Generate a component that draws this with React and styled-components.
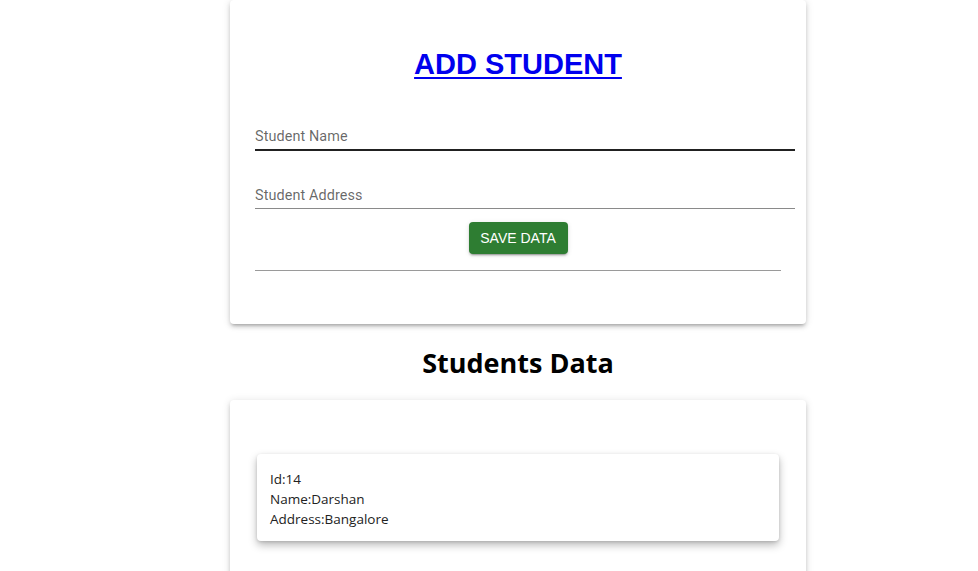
import React from 'react';
import styled, { createGlobalStyle } from 'styled-components';

const GlobalStyle = createGlobalStyle`
  html, body {
    margin: 0;
    padding: 0;
    background: #fff;
    overflow: hidden;
  }
`;

const Page = styled.div`
  width: 576px;
  margin-left: 230px;
  display: flex;
  flex-direction: column;
`;

const Card = styled.div`
  background: #fff;
  border-radius: 4px;
  box-shadow: 0 3px 3px -2px rgba(0, 0, 0, 0.2), 0 3px 4px 0 rgba(0, 0, 0, 0.14),
    0 1px 8px 0 rgba(0, 0, 0, 0.12);
  padding: ${(p) => p.$pad};
  margin-top: ${(p) => p.$top || '0'};
`;

const Title = styled.h1`
  margin: 48px 0 0;
  text-align: center;
  font-family: 'Liberation Sans', Arial, sans-serif;
  font-size: 29px;
  line-height: 32px;
  font-weight: bold;
  color: #0000ee;
  text-decoration: underline;
  text-decoration-thickness: 2px;
  text-underline-offset: 3px;
`;

const Field = styled.label`
  display: flex;
  align-items: center;
  height: 26px;
  padding-top: 4px;
  margin-right: -14px;
  margin-top: ${(p) => p.$top};
  border-bottom: ${(p) => (p.$active ? '2px solid #212121' : '1px solid #8a8a8a')};
  font-family: Roboto, 'Liberation Sans', sans-serif;
  font-size: 14.4px;
  letter-spacing: 0.1px;
  color: rgba(0, 0, 0, 0.6);
`;

const ButtonRow = styled.div`
  display: flex;
  justify-content: center;
  margin-top: 13px;
`;

const SaveButton = styled.button`
  width: 99px;
  height: 32px;
  border: none;
  border-radius: 4px;
  background: #2e7d32;
  color: #fff;
  font-family: 'Liberation Sans', Arial, sans-serif;
  font-size: 14px;
  font-weight: 400;
  text-transform: uppercase;
  box-shadow: 0 3px 1px -2px rgba(0, 0, 0, 0.2), 0 2px 2px 0 rgba(0, 0, 0, 0.14),
    0 1px 5px 0 rgba(0, 0, 0, 0.12);
  cursor: pointer;
`;

const Divider = styled.hr`
  margin: 16px 0 0;
  border: none;
  border-top: 1px solid #9a9a9a;
`;

const Heading = styled.h2`
  margin: 19px 0 0;
  text-align: center;
  font-family: 'Open Sans', 'Noto Sans', sans-serif;
  font-size: 27px;
  line-height: 40px;
  font-weight: 700;
  color: #000;
`;

const StudentCard = styled.div`
  background: #fff;
  border-radius: 4px;
  padding: 15px 13px 12px;
  box-shadow: 0 4px 8px rgba(0, 0, 0, 0.28), 0 1px 3px rgba(0, 0, 0, 0.12);
  font-family: 'Open Sans', 'Noto Sans', sans-serif;
  font-size: 13.5px;
  line-height: 20px;
  color: #222;
`;

const students = [{ id: 14, name: 'Darshan', address: 'Bangalore' }];

export default function App() {
  return (
    <>
      <GlobalStyle />
      <Page>
        <Card $pad="0 25px 53px">
          <Title>ADD STUDENT</Title>
          <Field $top="39px" $active>Student Name</Field>
          <Field $top="27px">Student Address</Field>
          <ButtonRow>
            <SaveButton>Save Data</SaveButton>
          </ButtonRow>
          <Divider />
        </Card>
        <Heading>Students Data</Heading>
        <Card $top="17px" $pad="54px 27px 40px">
          {students.map((s) => (
            <StudentCard key={s.id}>
              <div>Id:{s.id}</div>
              <div>Name:{s.name}</div>
              <div>Address:{s.address}</div>
            </StudentCard>
          ))}
        </Card>
      </Page>
    </>
  );
}
